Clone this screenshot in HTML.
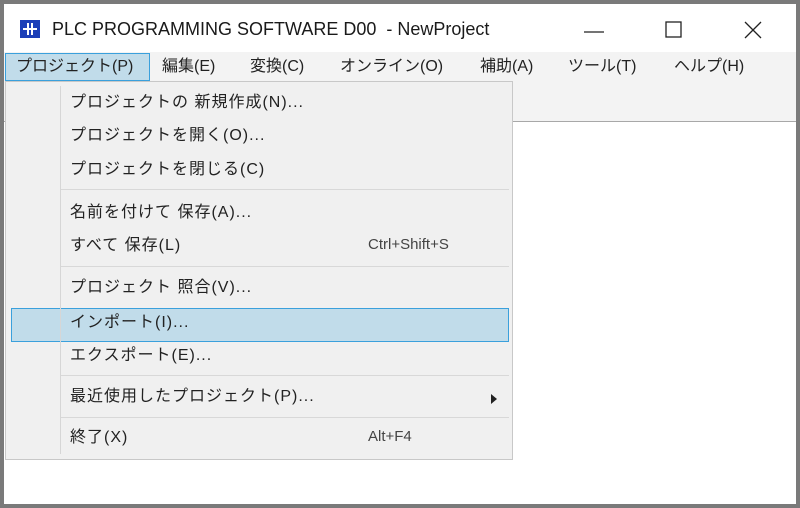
<!DOCTYPE html>
<html><head><meta charset="utf-8"><style>
*{margin:0;padding:0;box-sizing:border-box}
body{width:800px;height:508px;overflow:hidden;background:#7a7a7a;font-family:"Liberation Sans","Noto Sans CJK JP",sans-serif;position:relative}
.win{position:absolute;left:4px;top:4px;width:792px;height:500px;background:#fff}
.title{position:absolute;left:0;top:0;width:792px;height:48px;background:#fff}
.icon{position:absolute;left:16px;top:16px;width:20px;height:18px;background:#1c3fb8}
.ttext{position:absolute;left:48px;top:15px;font-size:18px;color:#1a1a1a;white-space:nowrap}
.menubar{position:absolute;left:0;top:48px;width:792px;height:30px;background:#f3f3f3}
.mi{position:absolute;top:0px;font-size:16px;color:#222;white-space:nowrap}
.tool{position:absolute;left:0;top:78px;width:792px;height:40px;background:#f3f3f3;border-bottom:1px solid #a8a8a8}
.drop{position:absolute;left:1px;top:77px;width:508px;height:379px;background:#f0f0f0;border:1px solid #c8c8c8}
.gut{position:absolute;left:54px;top:4px;width:1px;height:368px;background:#d6d6d6}
.it{position:absolute;left:64px;font-size:16px;color:#222;white-space:nowrap;letter-spacing:1px}
.sc{position:absolute;left:362px;font-size:15px;color:#444;white-space:nowrap}
.sep{position:absolute;left:55px;width:448px;height:1px;background:#d8d8d8}
.hl{position:absolute;left:5px;top:226px;width:498px;height:34px;background:#c1dcea;border:1px solid #3aa0dc}
</style></head><body>
<div class="win">
 <div class="title">
  <div class="icon"><svg width="20" height="18"><rect x="3" y="8" width="14" height="2" fill="#fff"/><rect x="7" y="3" width="2" height="12" fill="#fff"/><rect x="11" y="3" width="2" height="12" fill="#fff"/></svg></div>
  <div class="ttext">PLC PROGRAMMING SOFTWARE D00 &nbsp;- NewProject</div>
  <svg style="position:absolute;left:580px;top:18px" width="20" height="20"><line x1="0" y1="10" x2="20" y2="10" stroke="#222" stroke-width="1.3"/></svg>
  <svg style="position:absolute;left:661px;top:17px" width="18" height="18"><rect x="1" y="1" width="15" height="15" fill="none" stroke="#222" stroke-width="1.3"/></svg>
  <svg style="position:absolute;left:740px;top:17px" width="18" height="18"><path d="M1 1L17 17M17 1L1 17" stroke="#222" stroke-width="1.3"/></svg>
 </div>
 <div class="menubar">
  <div style="position:absolute;left:1px;top:1px;width:145px;height:28px;background:#c1dcea;border:1px solid #3aa0dc"></div>
  <div class="mi" style="left:12px">プロジェクト(P)</div>
  <div class="mi" style="left:158px">編集(E)</div>
  <div class="mi" style="left:246px">変換(C)</div>
  <div class="mi" style="left:336px">オンライン(O)</div>
  <div class="mi" style="left:476px">補助(A)</div>
  <div class="mi" style="left:564px">ツール(T)</div>
  <div class="mi" style="left:670px">ヘルプ(H)</div>
 </div>
 <div class="tool"></div>
 <div class="drop">
  <div class="hl"></div>
  <div class="gut"></div>
  <div class="it" style="top:6px">プロジェクトの 新規作成(N)...</div>
  <div class="it" style="top:39px">プロジェクトを開く(O)...</div>
  <div class="it" style="top:73px">プロジェクトを閉じる(C)</div>
  <div class="sep" style="top:107px"></div>
  <div class="it" style="top:116px">名前を付けて 保存(A)...</div>
  <div class="it" style="top:149px">すべて 保存(L)</div><div class="sc" style="top:154px">Ctrl+Shift+S</div>
  <div class="sep" style="top:184px"></div>
  <div class="it" style="top:191px">プロジェクト 照合(V)...</div>
  <div class="it" style="top:226px">インポート(I)...</div>
  <div class="it" style="top:259px">エクスポート(E)...</div>
  <div class="sep" style="top:293px"></div>
  <div class="it" style="top:300px">最近使用したプロジェクト(P)...</div>
  <svg style="position:absolute;left:485px;top:312px" width="6" height="10"><path d="M0 0L6 5L0 10Z" fill="#222"/></svg>
  <div class="sep" style="top:335px"></div>
  <div class="it" style="top:341px">終了(X)</div><div class="sc" style="top:346px">Alt+F4</div>
 </div>
</div>
</body></html>
